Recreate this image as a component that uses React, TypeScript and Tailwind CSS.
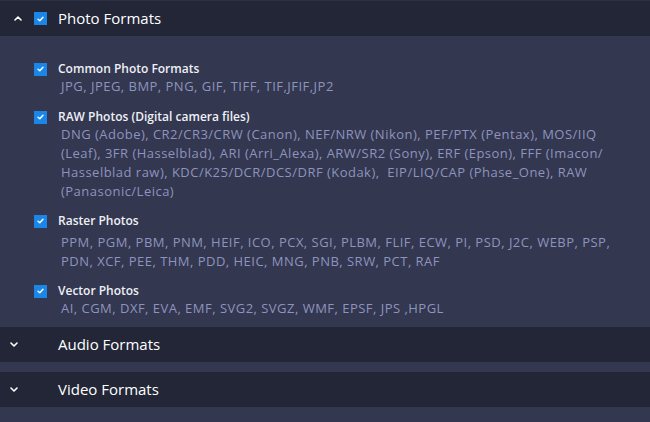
const items = [
  {
    title: 'Common Photo Formats',
    lines: ['JPG, JPEG, BMP, PNG, GIF, TIFF, TIF,JFIF,JP2'],
    mt: 'mt-[25px]',
    dt: 'mt-0',
  },
  {
    title: 'RAW Photos (Digital camera files)',
    lines: [
      'DNG (Adobe), CR2/CR3/CRW (Canon), NEF/NRW (Nikon), PEF/PTX (Pentax), MOS/IIQ',
      '(Leaf), 3FR (Hasselblad), ARI (Arri_Alexa), ARW/SR2 (Sony), ERF (Epson), FFF (Imacon/',
      'Hasselblad raw), KDC/K25/DCR/DCS/DRF (Kodak),  EIP/LIQ/CAP (Phase_One), RAW',
      '(Panasonic/Leica)',
    ],
    mt: 'mt-[13px]',
    dt: 'mt-0',
  },
  {
    title: 'Raster Photos',
    lines: [
      'PPM, PGM, PBM, PNM, HEIF, ICO, PCX, SGI, PLBM, FLIF, ECW, PI, PSD, J2C, WEBP, PSP,',
      'PDN, XCF, PEE, THM, PDD, HEIC, MNG, PNB, SRW, PCT, RAF',
    ],
    mt: 'mt-[12px]',
    dt: 'mt-[4px]',
  },
  {
    title: 'Vector Photos',
    lines: ['AI, CGM, DXF, EVA, EMF, SVG2, SVGZ, WMF, EPSF, JPS ,HPGL'],
    mt: 'mt-[12px]',
    dt: 'mt-0',
  },
];

function Check() {
  return (
    <span className="w-[13px] h-[13px] bg-[#1a86e8] flex items-center justify-center shrink-0">
      <svg width="7" height="6" viewBox="0 0 7 6" fill="none">
        <path d="M1 3.2 L2.8 4.8 L6 1.2" stroke="white" strokeWidth="1.4" strokeLinecap="round" strokeLinejoin="round" />
      </svg>
    </span>
  );
}

function Chevron({ up }: { up?: boolean }) {
  return (
    <svg width="8" height="5" viewBox="0 0 8 5" fill="none" className="shrink-0">
      <path d={up ? 'M1 4 L4 1 L7 4' : 'M1 1 L4 4 L7 1'} stroke="white" strokeWidth="1.6" strokeLinecap="round" strokeLinejoin="round" />
    </svg>
  );
}

export default function App() {
  return (
    <div className="w-[650px] h-[422px] bg-[#333750] overflow-hidden font-['Open_Sans',sans-serif]">
      <div className="h-[36px] bg-[#222637] border-t border-[#2c3045] flex items-center">
        <div className="ml-[14px] w-[20px]"><Chevron up /></div>
        <Check />
        <span className="ml-[11px] text-[15px] text-white">Photo Formats</span>
      </div>

      <div className="pb-[9px]">
        {items.map((it) => (
          <div key={it.title} className={it.mt}>
            <div className="h-[16px] flex items-center pl-[34px]">
              <Check />
              <span className="ml-[11px] text-[12px] font-semibold text-[#eef0f6]">{it.title}</span>
            </div>
            <div className={`${it.dt} pl-[61px] text-[13px] leading-[19px] text-[#8e94bd] tracking-[0.48px] whitespace-pre`}>
              {it.lines.map((l) => (
                <div key={l}>{l}</div>
              ))}
            </div>
          </div>
        ))}
      </div>

      <div className="h-[35px] bg-[#222637] flex items-center">
        <div className="ml-[10px] w-[48px]"><Chevron /></div>
        <span className="text-[15px] text-white">Audio Formats</span>
      </div>
      <div className="h-[10px]" />
      <div className="h-[35px] bg-[#222637] flex items-center">
        <div className="ml-[10px] w-[48px]"><Chevron /></div>
        <span className="text-[15px] text-white">Video Formats</span>
      </div>
    </div>
  );
}
